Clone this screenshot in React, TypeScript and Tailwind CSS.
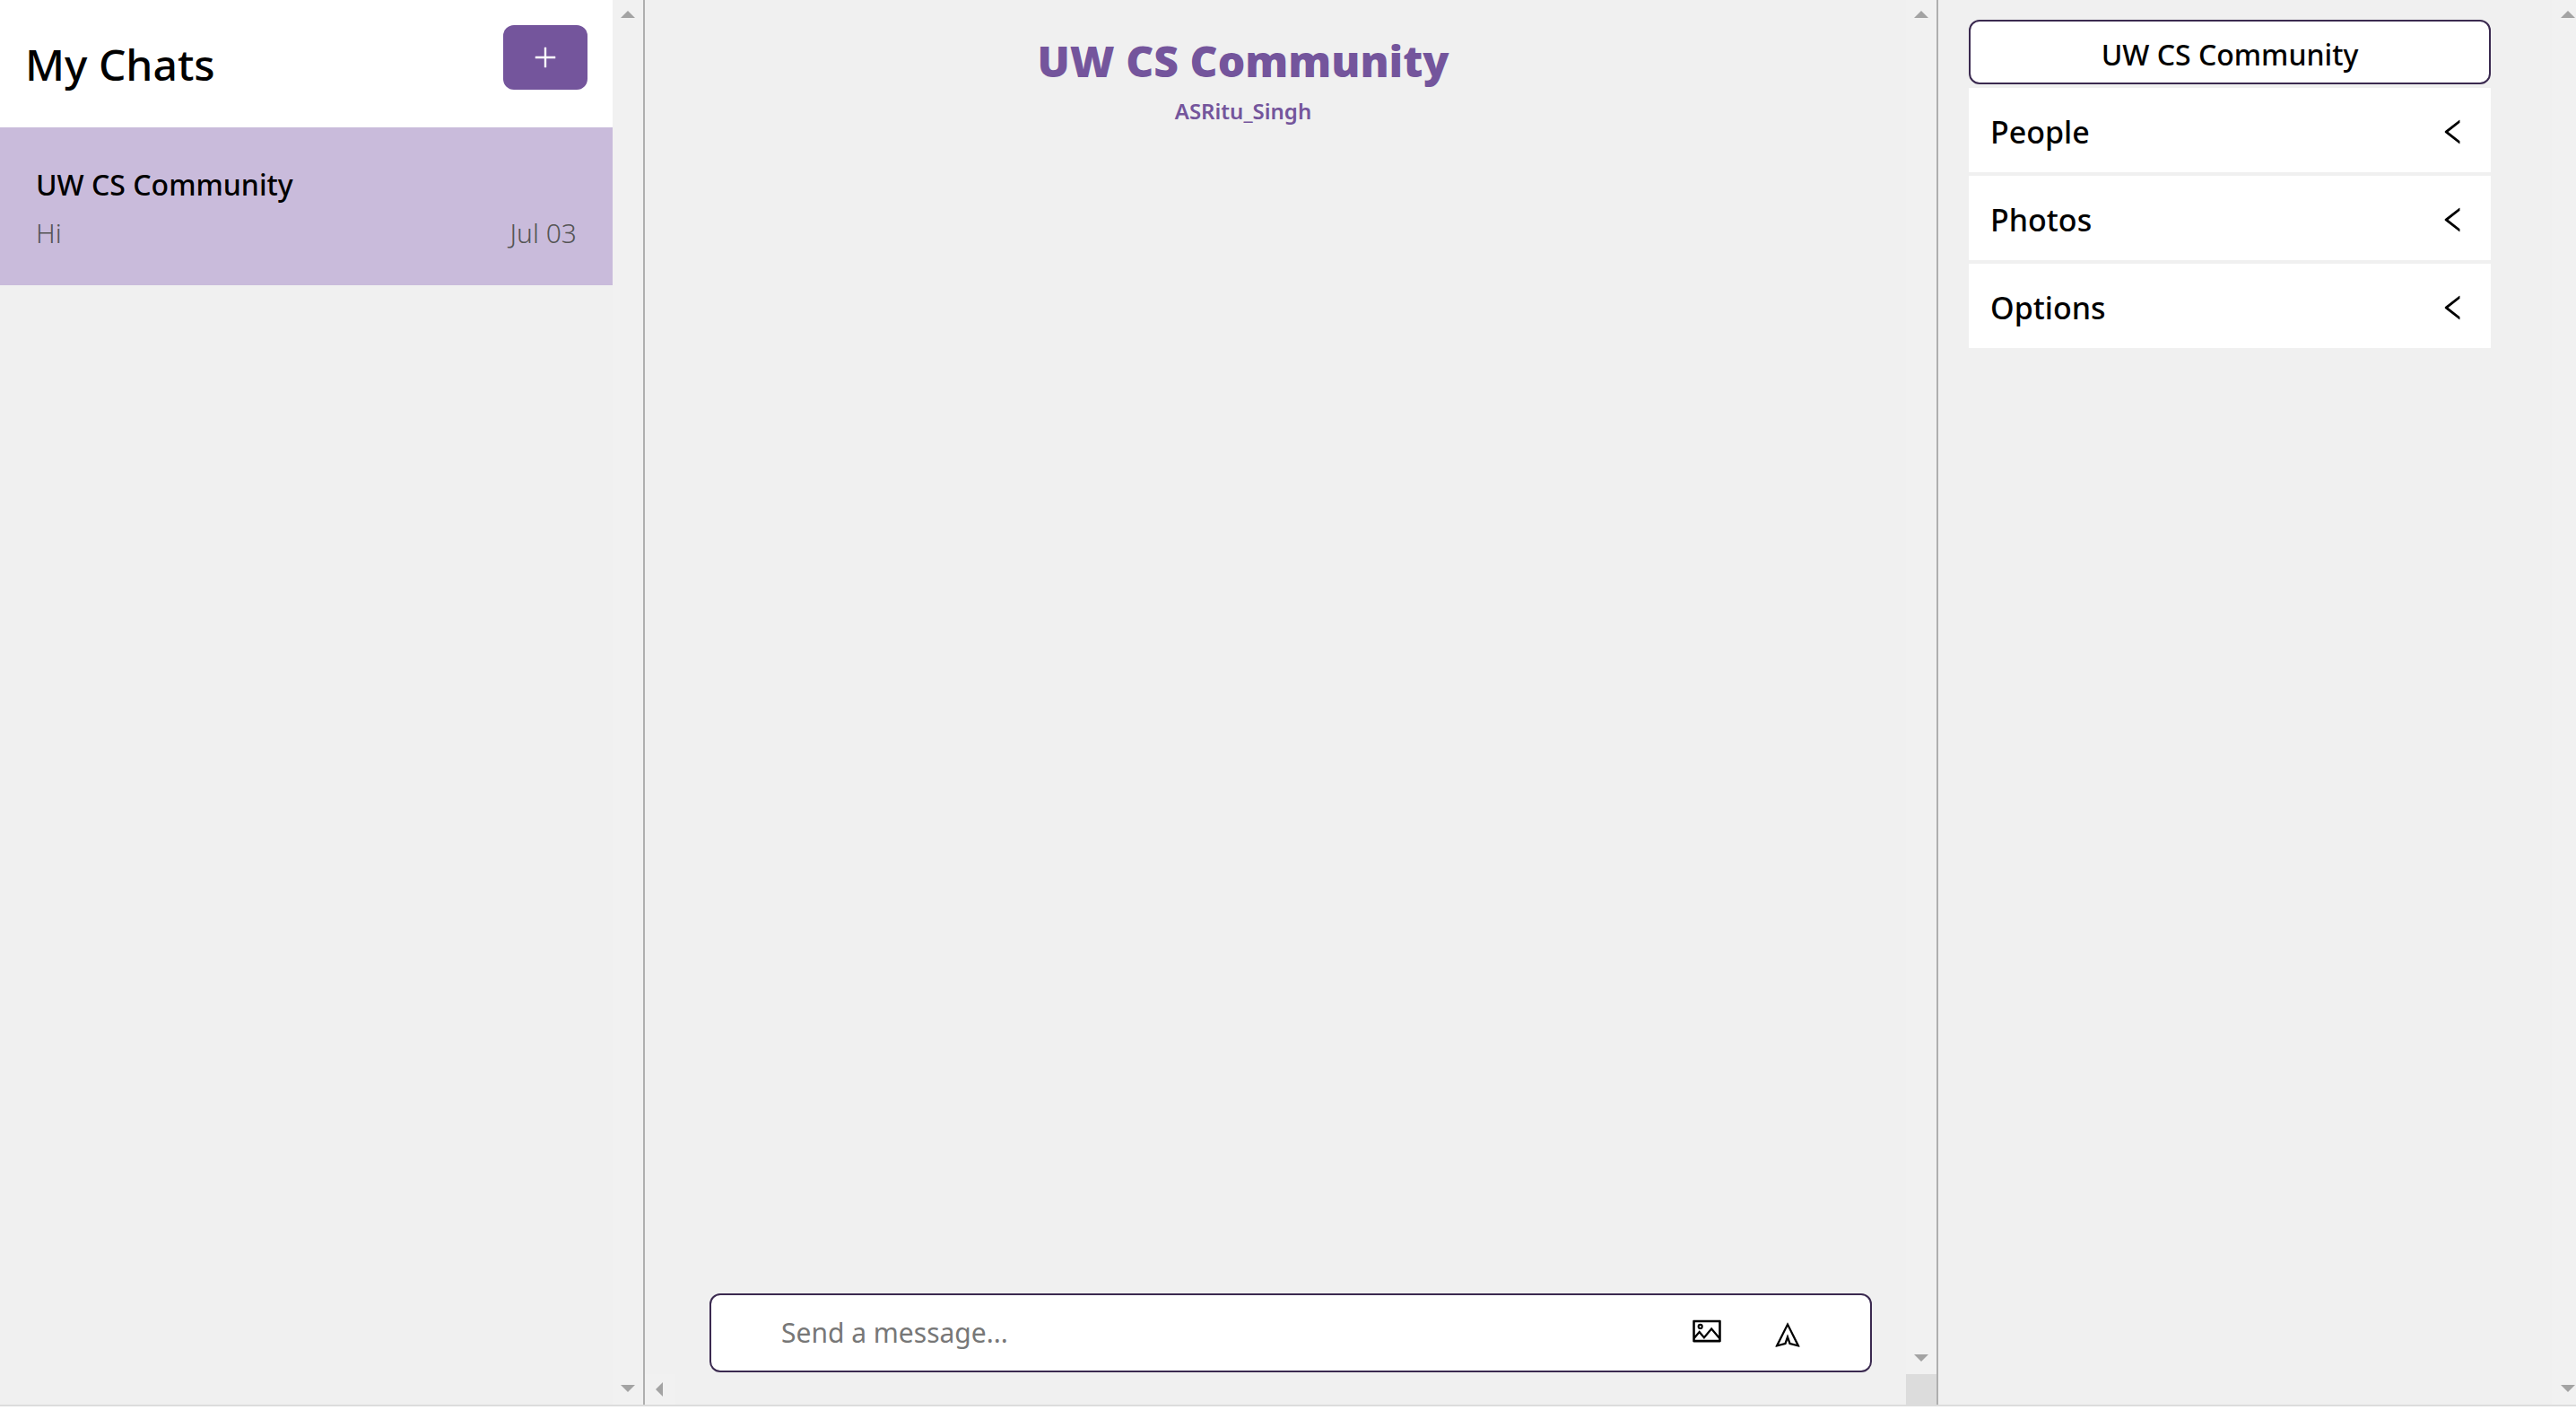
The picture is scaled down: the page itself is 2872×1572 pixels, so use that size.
import React from "react";
import { AiOutlineLeft, AiOutlinePicture, AiOutlinePlus, AiOutlineSend } from "react-icons/ai";

type Direction = "up" | "down" | "left";

function Arrow({ direction }: { direction: Direction }) {
  const points = {
    up: "8,0 16,8 0,8",
    down: "0,0 16,0 8,8",
    left: "8,0 8,16 0,8",
  }[direction];
  const size = direction === "left" ? "h-4 w-2" : "h-2 w-4";
  return (
    <svg className={`${size} fill-[#a3a3a3]`} viewBox={direction === "left" ? "0 0 8 16" : "0 0 16 8"} aria-hidden="true">
      <polygon points={points} />
    </svg>
  );
}

function VerticalTrack({ className }: { className: string }) {
  return (
    <div className={`flex shrink-0 flex-col items-center justify-between bg-[#f1f1f1] pt-3 pb-3.5 ${className}`}>
      <Arrow direction="up" />
      <Arrow direction="down" />
    </div>
  );
}

function ChatList() {
  return (
    <aside className="flex border-r-2 border-[#afafaf]">
      <div className="min-w-0 flex-1">
        <header className="flex h-[142px] items-start justify-between bg-white px-7 pt-7">
          <h1 className="pt-2 text-[48px] leading-[72px] font-medium">My Chats</h1>
          <button type="button" aria-label="New chat" className="flex h-[72px] w-[94px] items-center justify-center rounded-xl bg-[#74559c] text-white">
            <AiOutlinePlus className="size-8" />
          </button>
        </header>
        <a href="#chat" className="block h-[176px] bg-[#c9bbdb] px-10 pt-10">
          <div className="text-[32px] leading-12 font-medium">UW CS Community</div>
          <div className="mt-1.5 flex justify-between text-[30px] leading-12 font-light text-[#555]">
            <span>Hi</span>
            <span>Jul 03</span>
          </div>
        </a>
      </div>
      <VerticalTrack className="w-[34px]" />
    </aside>
  );
}

function Conversation() {
  return (
    <main className="flex flex-col border-r-2 border-[#afafaf]">
      <div className="flex flex-1">
        <section className="flex min-w-0 flex-1 flex-col">
          <div className="pt-10 pr-[72px] text-center text-[#74559c]">
            <h2 className="text-[48px] leading-14 font-black">UW CS Community</h2>
            <p className="mt-3 text-2xl leading-8 font-semibold">ASRitu_Singh</p>
          </div>
          <form className="-mr-[34px] mt-auto px-[72px] pb-0.5" onSubmit={(e) => e.preventDefault()}>
            <div className="flex h-[88px] items-center rounded-xl border-2 border-[#3b2a50] bg-white pr-[76px] pl-[78px]">
              <input aria-label="Message" placeholder="Send a message..." className="min-w-0 flex-1 text-[30px] leading-10 outline-none placeholder:text-[#777]" />
              <label className="cursor-pointer pb-1">
                <AiOutlinePicture className="size-9" />
                <input type="file" aria-label="Attach image" className="sr-only" />
              </label>
              <button type="submit" aria-label="Send" className="ml-14 pt-1">
                <AiOutlineSend className="size-8 -rotate-90" />
              </button>
            </div>
          </form>
        </section>
        <VerticalTrack className="w-[34px]" />
      </div>
      <div className="flex h-[34px] items-center justify-between">
        <div className="flex size-[34px] items-center bg-[#f1f1f1] pl-3">
          <Arrow direction="left" />
        </div>
        <div className="size-[34px] bg-[#dcdcdc]" />
      </div>
    </main>
  );
}

function Details() {
  return (
    <aside className="flex">
      <div className="min-w-0 flex-1 pt-[22px] pr-[68px] pl-[34px]">
        <input aria-label="Chat title" defaultValue="UW CS Community" className="block h-[72px] w-full rounded-xl border-2 border-[#3b2a50] bg-white pt-1 text-center text-[32px] font-medium outline-none" />
        {["People", "Photos", "Options"].map((name) => (
          <button key={name} type="button" className="mt-1 flex h-[94px] w-full items-center justify-between bg-white px-6 pt-1 text-[34px] font-medium">
            {name}
            <AiOutlineLeft className="size-9" />
          </button>
        ))}
      </div>
      <VerticalTrack className="w-[27px] pl-2" />
    </aside>
  );
}

export default function App() {
  return (
    <div className="h-screen bg-white pb-1 font-['Noto_Sans',sans-serif] text-black">
      <div className="grid h-full grid-cols-[719fr_1442fr_711fr] border-b-2 border-[#dcdcdc] bg-[#f0f0f0]">
        <ChatList />
        <Conversation />
        <Details />
      </div>
    </div>
  );
}
